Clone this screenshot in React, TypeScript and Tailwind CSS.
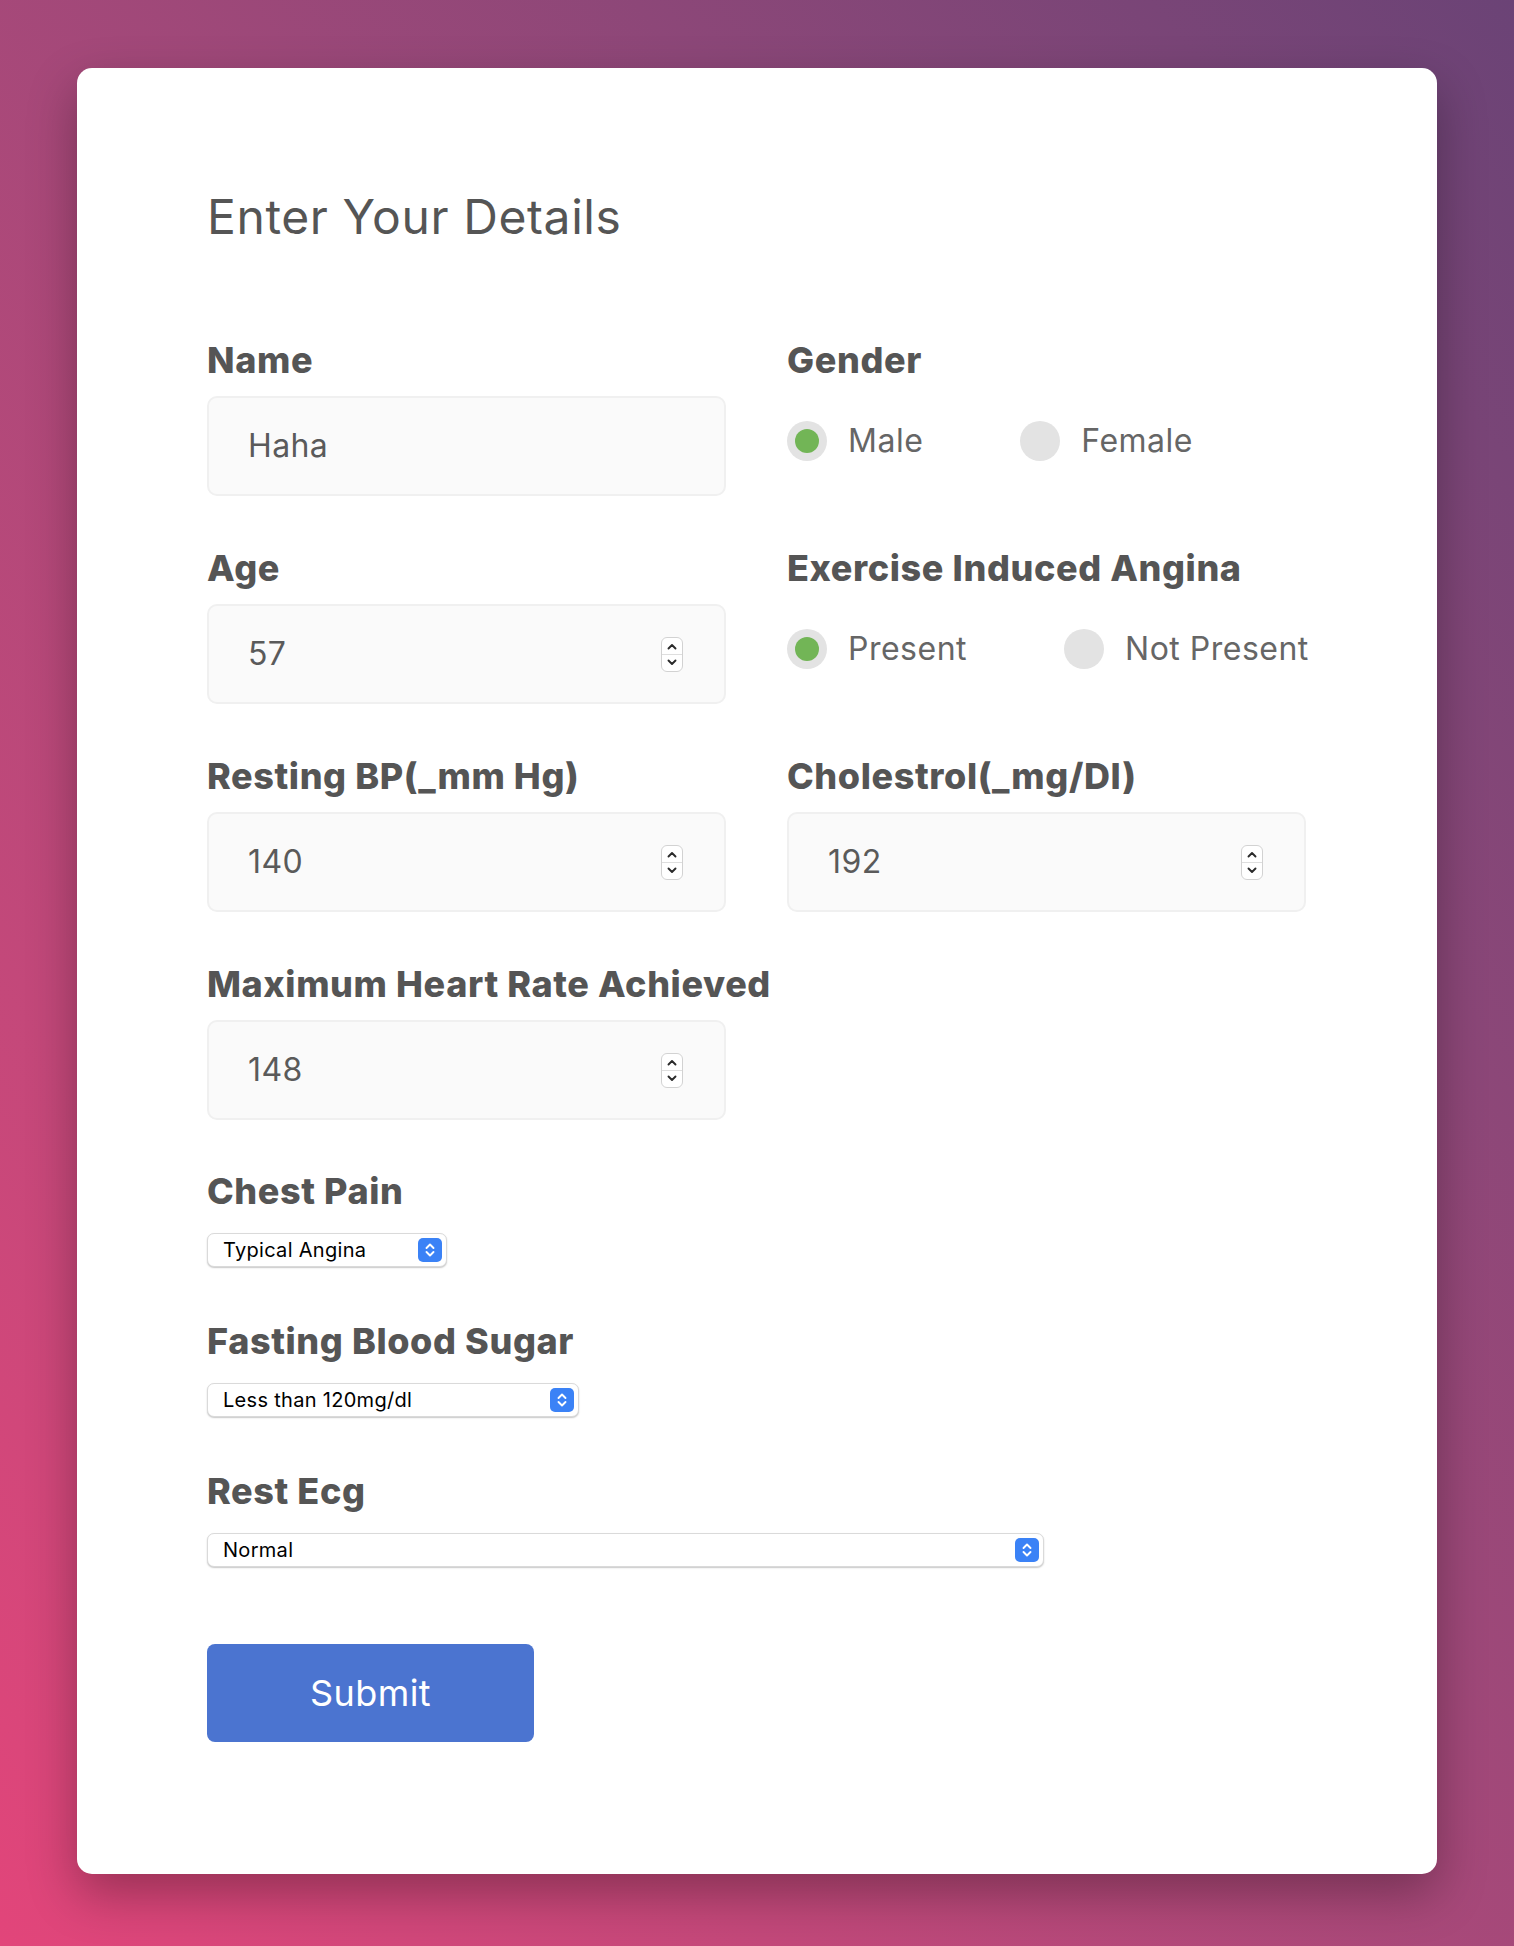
import { useState } from "react";

type Option = { value: string; label: string };

function Spinner() {
  return (
    <svg className="h-[35px] w-[22px] shrink-0" viewBox="0 0 22 35" fill="none">
      <rect x="0.5" y="0.5" width="21" height="34" rx="5.5" fill="#ffffff" stroke="#d2d2d2" />
      <line x1="1" y1="17.5" x2="21" y2="17.5" stroke="#dedede" />
      <path d="M7.5 11.5 L11 8 L14.5 11.5" stroke="#2a2a2a" strokeWidth="1.9" strokeLinecap="round" strokeLinejoin="round" />
      <path d="M7.5 23.5 L11 27 L14.5 23.5" stroke="#2a2a2a" strokeWidth="1.9" strokeLinecap="round" strokeLinejoin="round" />
    </svg>
  );
}

function SelectArrow() {
  return (
    <svg className="h-6 w-6 shrink-0" viewBox="0 0 24 24" fill="none">
      <rect width="24" height="24" rx="5" fill="#3b82f6" />
      <path d="M8.5 10 L12 6.5 L15.5 10" stroke="#ffffff" strokeWidth="1.9" strokeLinecap="round" strokeLinejoin="round" />
      <path d="M8.5 14 L12 17.5 L15.5 14" stroke="#ffffff" strokeWidth="1.9" strokeLinecap="round" strokeLinejoin="round" />
    </svg>
  );
}

function FieldLabel({ children }: { children: React.ReactNode }) {
  return (
    <label className="block whitespace-nowrap text-[36px] font-extrabold leading-[44px] tracking-[0.6px] text-[#555555]">
      {children}
    </label>
  );
}

function TextField({ label, value, number }: { label: string; value: string; number?: boolean }) {
  const [val, setVal] = useState(value);
  return (
    <div>
      <FieldLabel>{label}</FieldLabel>
      <div className="mt-[14px] flex h-[100px] items-center rounded-[10px] border-2 border-[#f0f0f0] bg-[#fafafa] pl-[39px] pr-[41px]">
        <input
          className="min-w-0 flex-1 bg-transparent text-[32px] tracking-[0.4px] text-[#5a5a5a] outline-none"
          value={val}
          onChange={(e) => setVal(e.target.value)}
        />
        {number && <Spinner />}
      </div>
    </div>
  );
}

function RadioGroup({ label, options, checked }: { label: string; options: string[]; checked: string }) {
  const [sel, setSel] = useState(checked);
  return (
    <div>
      <FieldLabel>{label}</FieldLabel>
      <div className="mt-[39px] flex items-center gap-[97px]">
        {options.map((opt) => (
          <button
            key={opt}
            type="button"
            onClick={() => setSel(opt)}
            className="flex shrink-0 items-center"
          >
            <span className="flex h-10 w-10 shrink-0 items-center justify-center rounded-full bg-[#e3e3e3]">
              {sel === opt && <span className="h-6 w-6 rounded-full bg-[#72b556]" />}
            </span>
            <span className="ml-[21px] whitespace-nowrap text-[32px] leading-10 tracking-[0.5px] text-[#666666]">
              {opt}
            </span>
          </button>
        ))}
      </div>
    </div>
  );
}

function SelectField({
  label,
  options,
  width,
  className,
}: {
  label: string;
  options: Option[];
  width: string;
  className?: string;
}) {
  return (
    <div className={className}>
      <FieldLabel>{label}</FieldLabel>
      <div
        className={`mt-[20px] flex h-[34px] items-center rounded-[7px] border border-[#dadada] bg-white pl-[15px] pr-[4px] shadow-[0_1px_1.5px_rgba(0,0,0,0.22)] ${width}`}
      >
        <select className="min-w-0 flex-1 appearance-none bg-transparent text-[20px] leading-[28px] tracking-[0.3px] text-black outline-none">
          {options.map((o) => (
            <option key={o.value} value={o.value}>
              {o.label}
            </option>
          ))}
        </select>
        <SelectArrow />
      </div>
    </div>
  );
}

export default function App() {
  return (
    <div className="min-h-screen bg-linear-to-tr from-[#e2457a] to-[#6b4376] pt-[68px] pb-[72px] font-['Inter',sans-serif]">
      <form className="mx-auto w-[1360px] rounded-[15px] bg-white px-[130px] pt-[120px] pb-[132px] shadow-[0_20px_50px_rgba(0,0,0,0.3)]">
        <h1 className="text-[48px] font-normal leading-[58px] tracking-[0.6px] text-[#555555]">Enter Your Details</h1>

        <div className="mt-[92px] grid grid-cols-[519px_519px] gap-x-[61px] gap-y-[50px]">
          <TextField label="Name" value="Haha" />
          <RadioGroup label="Gender" options={["Male", "Female"]} checked="Male" />
          <TextField label="Age" value="57" number />
          <RadioGroup label="Exercise Induced Angina" options={["Present", "Not Present"]} checked="Present" />
          <TextField label="Resting BP(_mm Hg)" value="140" number />
          <TextField label="Cholestrol(_mg/Dl)" value="192" number />
          <TextField label="Maximum Heart Rate Achieved" value="148" number />
        </div>

        <SelectField
          className="mt-[49px]"
          label="Chest Pain"
          width="w-[240px]"
          options={[
            { value: "0", label: "Typical Angina" },
            { value: "1", label: "Atypical Angina" },
            { value: "2", label: "Non-anginal Pain" },
            { value: "3", label: "Asymptomatic" },
          ]}
        />
        <SelectField
          className="mt-[52px]"
          label="Fasting Blood Sugar"
          width="w-[372px]"
          options={[
            { value: "0", label: "Less than 120mg/dl" },
            { value: "1", label: "Greater than 120mg/dl" },
          ]}
        />
        <SelectField
          className="mt-[52px]"
          label="Rest Ecg"
          width="w-[837px]"
          options={[
            { value: "0", label: "Normal" },
            { value: "1", label: "Having ST-T wave abnormality" },
            { value: "2", label: "Showing probable or definite left ventricular hypertrophy" },
          ]}
        />

        <button
          type="button"
          className="mt-[77px] h-[98px] w-[327px] rounded-[8px] bg-[#4b74d0] text-[36px] tracking-[0.4px] text-white"
        >
          Submit
        </button>
      </form>
    </div>
  );
}
